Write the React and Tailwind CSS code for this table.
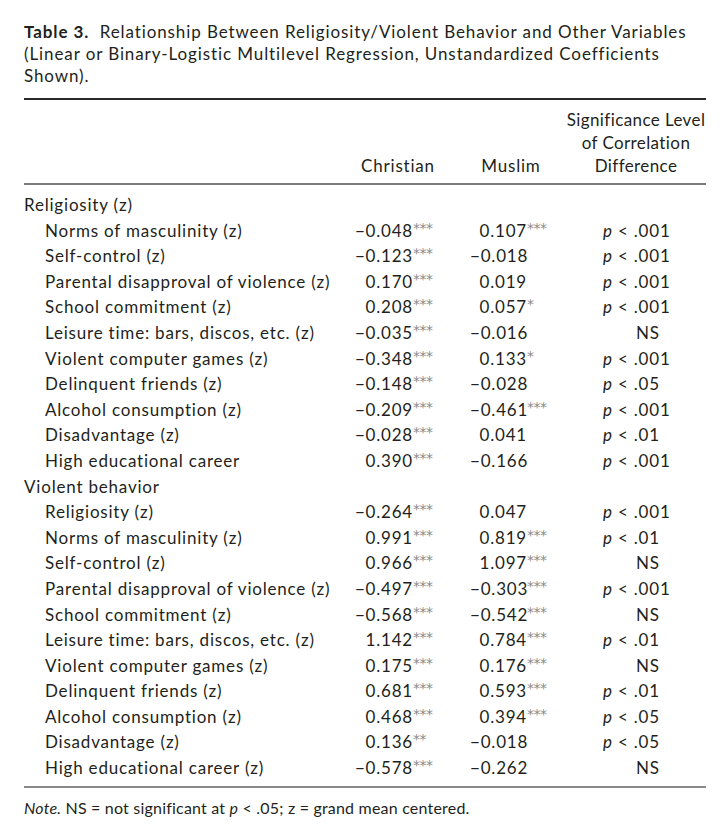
const rows = [
  { group: 'Religiosity (z)' },
  { label: 'Norms of masculinity (z)', c: '−0.048', cs: '***', m: '0.107', ms: '***', p: '.001' },
  { label: 'Self-control (z)', c: '−0.123', cs: '***', m: '−0.018', ms: '', p: '.001' },
  { label: 'Parental disapproval of violence (z)', c: '0.170', cs: '***', m: '0.019', ms: '', p: '.001' },
  { label: 'School commitment (z)', c: '0.208', cs: '***', m: '0.057', ms: '*', p: '.001' },
  { label: 'Leisure time: bars, discos, etc. (z)', c: '−0.035', cs: '***', m: '−0.016', ms: '', p: null },
  { label: 'Violent computer games (z)', c: '−0.348', cs: '***', m: '0.133', ms: '*', p: '.001' },
  { label: 'Delinquent friends (z)', c: '−0.148', cs: '***', m: '−0.028', ms: '', p: '.05' },
  { label: 'Alcohol consumption (z)', c: '−0.209', cs: '***', m: '−0.461', ms: '***', p: '.001' },
  { label: 'Disadvantage (z)', c: '−0.028', cs: '***', m: '0.041', ms: '', p: '.01' },
  { label: 'High educational career', c: '0.390', cs: '***', m: '−0.166', ms: '', p: '.001' },
  { group: 'Violent behavior' },
  { label: 'Religiosity (z)', c: '−0.264', cs: '***', m: '0.047', ms: '', p: '.001' },
  { label: 'Norms of masculinity (z)', c: '0.991', cs: '***', m: '0.819', ms: '***', p: '.01' },
  { label: 'Self-control (z)', c: '0.966', cs: '***', m: '1.097', ms: '***', p: null },
  { label: 'Parental disapproval of violence (z)', c: '−0.497', cs: '***', m: '−0.303', ms: '***', p: '.001' },
  { label: 'School commitment (z)', c: '−0.568', cs: '***', m: '−0.542', ms: '***', p: null },
  { label: 'Leisure time: bars, discos, etc. (z)', c: '1.142', cs: '***', m: '0.784', ms: '***', p: '.01' },
  { label: 'Violent computer games (z)', c: '0.175', cs: '***', m: '0.176', ms: '***', p: null },
  { label: 'Delinquent friends (z)', c: '0.681', cs: '***', m: '0.593', ms: '***', p: '.01' },
  { label: 'Alcohol consumption (z)', c: '0.468', cs: '***', m: '0.394', ms: '***', p: '.05' },
  { label: 'Disadvantage (z)', c: '0.136', cs: '**', m: '−0.018', ms: '', p: '.05' },
  { label: 'High educational career (z)', c: '−0.578', cs: '***', m: '−0.262', ms: '', p: null },
]

function Stars({ s }) {
  return (
    <span className="relative -top-[4px] font-['DejaVu_Sans',sans-serif] text-[14px] text-[#8a8a8a] tracking-[-0.5px]">{s}</span>
  )
}

export default function App() {
  return (
    <div className="w-[720px] h-[837px] bg-white text-[#231f20] font-['Lato','Liberation_Sans',sans-serif] text-[17px] tracking-[0.8px]">
      <div className="pl-[24px] pr-[14px] pt-[21px]">
        {/* Caption */}
        <p className="leading-[22px] whitespace-nowrap tracking-[0.9px]">
          <span className="font-bold">Table 3.</span>
          {'\u00a0 '}Relationship Between Religiosity/Violent Behavior and Other Variables
          <br />
          (Linear or Binary-Logistic Multilevel Regression, Unstandardized Coefficients
          <br />
          Shown).
        </p>

        <div className="mt-[11px] border-t-[2px] border-[#2a2a2a]" />

        {/* Header */}
        <div className="flex items-end pt-[8px] pb-[6px] leading-[23px]">
          <div className="w-[316px]" />
          <div className="w-[116px] text-center">Christian</div>
          <div className="w-[110px] text-center">Muslim</div>
          <div className="w-[140px] text-center tracking-[0.4px]">
            Significance Level
            <br />
            of Correlation
            <br />
            Difference
          </div>
        </div>

        <div className="border-t-[2px] border-[#7a7a7a]" />

        {/* Body */}
        <div className="pt-[7px] pb-[5px]">
          {rows.map((r, i) =>
            r.group ? (
              <div key={i} className="h-[25.6px] leading-[25.6px]">{r.group}</div>
            ) : (
              <div key={i} className="flex h-[25.6px] leading-[25.6px]">
                <div className="w-[316px] pl-[21px] whitespace-nowrap">{r.label}</div>
                <div className="w-[73px] text-right">{r.c}</div>
                <div className="w-[57px]"><Stars s={r.cs} /></div>
                <div className="w-[57px] text-right">{r.m}</div>
                <div className="w-[53px]"><Stars s={r.ms} /></div>
                <div className="flex-1 whitespace-nowrap">
                  {r.p ? (
                    <span className="pl-[23px]"><i>p</i> &lt; {r.p}</span>
                  ) : (
                    <span className="pl-[56px]">NS</span>
                  )}
                </div>
              </div>
            )
          )}
        </div>

        <div className="border-t-[2px] border-[#8a8a8a]" />

        <p className="pt-[9px] text-[16px] leading-[22px] tracking-[0.2px]">
          <i>Note.</i> NS = not significant at <i>p</i> &lt; .05; z = grand mean centered.
        </p>
      </div>
    </div>
  )
}
